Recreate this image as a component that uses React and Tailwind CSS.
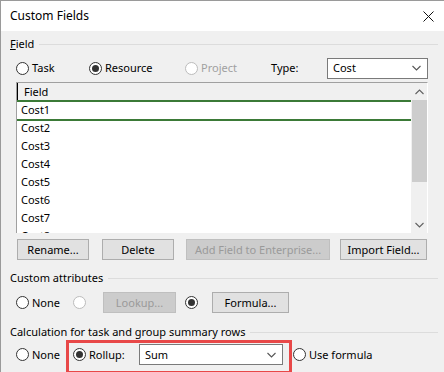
import React from "react";

const font = "font-['Segoe_UI','Noto_Sans',sans-serif]";

function Radio({ checked, disabled, label }) {
  return (
    <div className="flex items-center">
      <span
        className={
          "flex w-[13px] h-[13px] items-center justify-center rounded-full border bg-white " +
          (disabled ? "border-[#bcbcbc]" : "border-[#333333]")
        }
      >
        {checked && <span className="w-[7px] h-[7px] rounded-full bg-[#333333]" />}
      </span>
      {label && (
        <span className={"ml-[3px] " + (disabled ? "text-[#a0a0a0]" : "text-black")}>{label}</span>
      )}
    </div>
  );
}

function Btn({ children, w, disabled }) {
  return (
    <div
      className={
        "flex h-[21px] items-center justify-center border " +
        w +
        (disabled
          ? " bg-[#cccccc] border-[#bfbfbf] text-[#9a9a9a]"
          : " bg-[#e1e1e1] border-[#adadad] text-black")
      }
    >
      {children}
    </div>
  );
}

function Chevron({ down = true, color = "#555" }) {
  return (
    <svg width="9" height="6" viewBox="0 0 9 6">
      <path
        d={down ? "M0.5 1 L4.5 5 L8.5 1" : "M0.5 5 L4.5 1 L8.5 5"}
        fill="none"
        stroke={color}
        strokeWidth="1.1"
      />
    </svg>
  );
}

function Select({ value, w }) {
  return (
    <div className={"flex h-[21px] items-center justify-between border border-[#7a7a7a] bg-white pl-[5px] pr-[6px] " + w}>
      <span>{value}</span>
      <Chevron />
    </div>
  );
}

function GroupLabel({ children }) {
  return (
    <div className="flex h-[16px] items-center">
      <span className="whitespace-nowrap">{children}</span>
      <div className="ml-[5px] mr-[6px] h-px flex-1 bg-[#dcdcdc]" />
    </div>
  );
}

export default function App() {
  const rows = ["Cost1", "Cost2", "Cost3", "Cost4", "Cost5", "Cost6", "Cost7", "Cost8"];

  return (
    <div className={"w-[444px] h-[372px] overflow-hidden bg-[#f0f0f0] border-l border-t border-[#9a9a9a] text-[11px] leading-[16px] text-black " + font}>
      <div className="flex h-[30px] items-center justify-between bg-white pl-[9px] pr-[10px] text-[12px]">
        <span>Custom Fields</span>
        <svg width="11" height="11" viewBox="0 0 11 11">
          <path d="M0.5 0.5 L10.5 10.5 M10.5 0.5 L0.5 10.5" stroke="#111" strokeWidth="1" />
        </svg>
      </div>

      <div className="pl-[9px]">
        <div className="mt-[5px]">
          <GroupLabel>
            <span className="underline">F</span>ield
          </GroupLabel>
        </div>

        <div className="mt-[6px] ml-[6px] flex h-[20px] items-center">
          <div className="w-[73px]">
            <Radio label="Task" />
          </div>
          <div className="w-[96px]">
            <Radio checked label="Resource" />
          </div>
          <div className="w-[86px]">
            <Radio disabled label="Project" />
          </div>
          <div className="w-[56px]">Type:</div>
          <Select value="Cost" w="w-[101px] h-[20px]" />
        </div>

        <div className="mt-[4px] ml-[6px] flex w-[412px] h-[151px] border-t border-l border-[#a0a0a0] border-r border-r-white bg-white">
          <div className="flex-1 overflow-hidden">
            <div className="flex h-[18px] items-center border-l border-black bg-[#f0f0f0] pl-[6px]">Field</div>
            {rows.map((r, i) => (
              <div key={r} className="relative flex h-[18px] items-center pl-[4px]">
                {i === 0 && (
                  <div className="absolute left-0 right-0 top-[-1px] h-[21px] border-y-2 border-[#3b7a37]" />
                )}
                <span className="relative">{r}</span>
              </div>
            ))}
          </div>
          <div className="flex w-[16px] flex-col items-center bg-[#f0f0f0]">
            <div className="flex h-[17px] items-center justify-center">
              <Chevron down={false} color="#606060" />
            </div>
            <div className="h-[82px] w-[15px] bg-[#cdcdcd]" />
            <div className="flex-1" />
            <div className="flex h-[17px] items-center justify-center">
              <Chevron color="#606060" />
            </div>
          </div>
        </div>

        <div className="mt-[6px] ml-[7px] flex">
          <Btn w="w-[72px]">Rename...</Btn>
          <div className="ml-[13px]">
            <Btn w="w-[72px]">Delete</Btn>
          </div>
          <div className="ml-[12px]">
            <Btn w="w-[144px]" disabled>Add Field to Enterprise...</Btn>
          </div>
          <div className="ml-[10px]">
            <Btn w="w-[87px]">Import Field...</Btn>
          </div>
        </div>

        <div className="mt-[10px]">
          <GroupLabel>Custom attributes</GroupLabel>
        </div>

        <div className="mt-[6px] ml-[6px] flex h-[21px] items-center">
          <div className="w-[57px]">
            <Radio label="None" />
          </div>
          <div className="w-[30px]">
            <Radio disabled />
          </div>
          <Btn w="w-[73px]" disabled>Lookup...</Btn>
          <div className="ml-[9px] w-[27px]">
            <Radio checked />
          </div>
          <Btn w="w-[77px]">Formula...</Btn>
        </div>

        <div className="mt-[11px]">
          <GroupLabel>Calculation for task and group summary rows</GroupLabel>
        </div>

        <div className="ml-[6px] flex items-start">
          <div className="mt-[4px] flex h-[21px] w-[50px] items-center">
            <Radio label="None" />
          </div>
          <div className="flex h-[34px] w-[226px] items-start border-[3px] border-[#e84848] pt-[1px] pl-[4px]">
            <div className="flex h-[21px] w-[66px] items-center">
              <Radio checked label="Rollup:" />
            </div>
            <Select value="Sum" w="w-[144px]" />
          </div>
          <div className="mt-[4px] ml-[1px] flex h-[21px] items-center">
            <Radio label="Use formula" />
          </div>
        </div>
      </div>
    </div>
  );
}
